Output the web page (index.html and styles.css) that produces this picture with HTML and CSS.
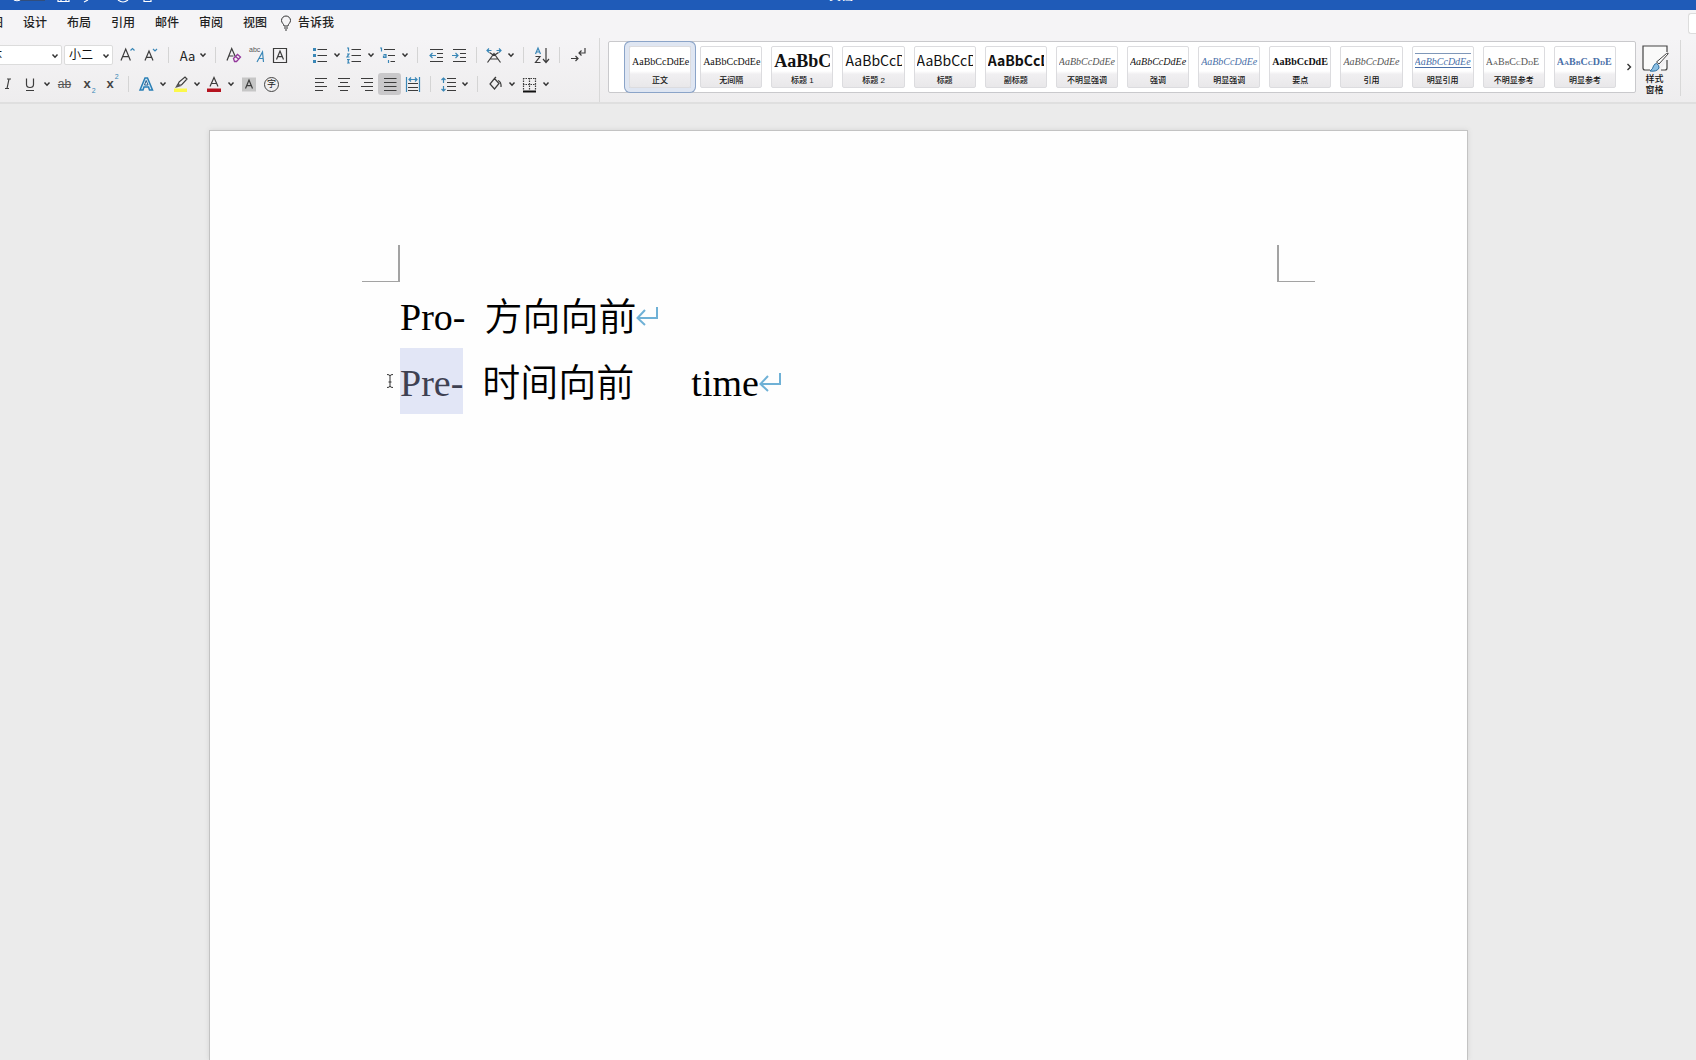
FILE: index.html
```html
<!DOCTYPE html>
<html lang="zh-CN">
<head>
<meta charset="utf-8">
<title>文档</title>
<link rel="stylesheet" href="styles.css">
</head>
<body>
<svg class="defs" aria-hidden="true">
  <symbol id="chev" viewBox="0 0 8 8"><path d="M1.500 2.500 4 5.200 6.500 2.500" fill="none" stroke="#333" stroke-width="1.500"/></symbol>
  <symbol id="ret" viewBox="0 0 24 20"><path d="M21 1V12H2M9 4 1.500 12 9 19" fill="none" stroke="#6fb1d6" stroke-width="2"/></symbol>
</svg>
<header class="titlebar">
  <svg class="quick" viewBox="0 0 160 10" aria-hidden="true">
    <path d="M18 0H45" fill="none" stroke="#3a4a68" stroke-width="1.500"/>
    <g fill="none" stroke="#fff" stroke-width="1.200"><path d="M14 0Q17 1.500 20 0M58 0V1.500H69V0M61 0V1M66 0V1M88 0 84 2M118 0Q123 4 128 0M144 0V1.500H151V0"/></g>
  </svg>
  <h1 class="doc-title">文档</h1>
</header>
<nav class="tabs">
  <a href="#">绘图</a><a href="#">设计</a><a href="#">布局</a><a href="#">引用</a><a href="#">邮件</a><a href="#">审阅</a><a href="#">视图</a>
  <a href="#" class="tell"><svg width="12" height="16" viewBox="0 0 12 16"><path d="M4 11C4 9 1.500 8 1.500 5.500a4.500 4.500 0 0 1 9 0C10.500 8 8 9 8 11ZM4 13H8M5 15H7" fill="none" stroke="#333"/></svg>告诉我</a>
  <button class="share" aria-label="共享"></button>
</nav>
<div class="ribbon">
  <section class="group font-group">
    <div class="row">
      <label class="combo font-name"><select aria-label="字体"><option>宋体</option></select><svg class="chev"><use href="#chev"/></svg></label>
      <label class="combo font-size"><select aria-label="字号"><option>小二</option></select><svg class="chev"><use href="#chev"/></svg></label>
      <button class="tool" aria-label="增大字号"><svg viewBox="0 0 20 20"><path d="M3 15.500 7.700 4 12.400 15.500M4.600 11.700H10.800" class="k"/><path d="M12.500 5.500 14.500 3.500 16.500 5.500" class="b"/></svg></button>
      <button class="tool" aria-label="减小字号"><svg viewBox="0 0 20 20"><path d="M4 15.500 8 6 12 15.500M5.500 12.300H10.500" class="k"/><path d="M12 4 14 6 16 4" class="b"/></svg></button>
      <i class="sep"></i>
      <button class="split" aria-label="更改大小写"><span class="aa">Aa</span><svg class="chev"><use href="#chev"/></svg></button>
      <i class="sep"></i>
      <button class="tool" aria-label="清除格式"><svg viewBox="0 0 20 20"><path d="M3 15.500 7.700 3.500 11.500 12M4.600 11H9.500" class="k"/><path d="m9.500 13.500 4-4 3 2.500-4 4.500H10.500ZM11.500 11.500 14.500 14" fill="none" stroke="#93389b" stroke-width="1.300"/></svg></button>
      <button class="tool" aria-label="拼音指南"><svg viewBox="0 0 20 20"><text x="2" y="7" class="tiny">abc</text><path d="M10 17 15.500 7 16.500 17M12 13.500H16" class="b"/></svg></button>
      <button class="tool" aria-label="字符边框"><svg viewBox="0 0 20 20"><path d="M3.500 3.500H16.500V17.500H3.500ZM6.500 14.500 10 6 13.500 14.500M7.700 11.700H12.300" class="k"/></svg></button>
    </div>
    <div class="row lower">
      <button class="tool" aria-label="倾斜"><svg viewBox="0 0 20 20"><path d="M9 5H13M7 14.500H11M11 5 9 14.500" class="k"/></svg></button>
      <button class="split" aria-label="下划线"><svg viewBox="0 0 20 20"><path d="M6.500 4.500V10.500Q6.500 13.500 10 13.500T13.500 10.500V4.500M6 16.500H14" class="k"/></svg><svg class="chev"><use href="#chev"/></svg></button>
      <button class="tool strike" aria-label="删除线">ab</button>
      <button class="tool script" aria-label="下标"><b>x</b><span class="sub">2</span></button>
      <button class="tool script" aria-label="上标"><b>x</b><span class="sup">2</span></button>
      <i class="sep"></i>
      <button class="split" aria-label="文本效果"><svg viewBox="0 0 20 20"><path d="M4 16 9 4H11.500L16.500 16H13.500L12.500 13H8L7 16Z" fill="#cfe6f5" stroke="#2a7fb5" stroke-width="1.500"/><path d="M8.500 11 10.200 6.500 12 11Z" fill="#fff" stroke="#2b5f8c"/></svg><svg class="chev"><use href="#chev"/></svg></button>
      <button class="split" aria-label="突出显示"><svg viewBox="0 0 20 20"><path d="M4 14.500H17V18H4Z" fill="#fbf84a"/><path d="m8 11 1-3 6-5 2 2-5.500 6Z" class="k"/><path d="m5 14 2.500-4.500 4 2.500Z" fill="#555"/></svg><svg class="chev"><use href="#chev"/></svg></button>
      <button class="split" aria-label="字体颜色"><svg viewBox="0 0 20 20"><path d="M3 14.500H17V18H3Z" fill="#b5131f"/><path d="M6 12.500 10 3.500 14 12.500M7.500 9.500H12.500" class="k"/></svg><svg class="chev"><use href="#chev"/></svg></button>
      <button class="tool" aria-label="字符底纹"><svg viewBox="0 0 20 20"><path d="M3 3.500H17V17.500H3Z" fill="#c6c6c6"/><path d="M6.500 14.500 10 6 13.500 14.500M7.700 11.700H12.300" class="k"/></svg></button>
      <button class="tool" aria-label="带圈字符"><span class="ring">字</span></button>
    </div>
  </section>
  <section class="group">
    <div class="row">
      <button class="split" aria-label="项目符号"><svg viewBox="0 0 20 20"><path d="M7.500 4.500H17M7.500 10.500H17M7.500 16.500H17" class="k"/><path d="M3 3H6V6H3ZM3 9H6V12H3ZM3 15H6V18H3Z" fill="#3a87b7"/></svg><svg class="chev"><use href="#chev"/></svg></button>
      <button class="split" aria-label="编号"><svg viewBox="0 0 20 20"><path d="M7.500 4.500H17M7.500 10.500H17M7.500 16.500H17" class="k"/><path d="M3 3H4.500V6.500M3 9H5L3 12H5.500M3 14.500H5L4 16 5 18H3" class="b"/></svg><svg class="chev"><use href="#chev"/></svg></button>
      <button class="split" aria-label="多级列表"><svg viewBox="0 0 20 20"><path d="M6 4.500H17M10 10.500H17M12.500 16.500H17" class="k"/><path d="M2 3H3.500V6.500M5.500 9.500H8V12.500H5.500V11H8M10.500 15V18" class="b"/></svg><svg class="chev"><use href="#chev"/></svg></button>
      <i class="sep"></i>
      <button class="tool" aria-label="减少缩进"><svg viewBox="0 0 20 20"><path d="M4 4.500H17M11 8.500H17M11 12.500H17M4 16.500H17" class="k"/><path d="M10 10.500H4M6.500 8 4 10.500 6.500 13" class="b"/></svg></button>
      <button class="tool" aria-label="增加缩进"><svg viewBox="0 0 20 20"><path d="M4 4.500H17M11 8.500H17M11 12.500H17M4 16.500H17" class="k"/><path d="M3 10.500H9M6.500 8 9 10.500 6.500 13" class="b"/></svg></button>
      <i class="sep"></i>
      <button class="split" aria-label="中文版式"><svg viewBox="0 0 20 20"><path d="M3.500 17.500 10 8.500 16.500 17.500M6 14H14M5.500 7.500 10 10.500 14.500 7.500" class="k"/><path d="M7.500 5.500H3M5 3.500 3 5.500 5 7.500M12.500 5.500H17M15 3.500 17 5.500 15 7.500" class="b"/></svg><svg class="chev"><use href="#chev"/></svg></button>
      <i class="sep"></i>
      <button class="tool" aria-label="排序"><svg viewBox="0 0 20 20"><path d="M3.500 9 6 3 8.500 9M4.500 7H7.500" class="b"/><path d="M3.500 11.500H8L3.500 17.500H8.500M14 3V17M11 14 14 17.500 17 14" class="k"/></svg></button>
      <i class="sep"></i>
      <button class="tool" aria-label="显示编辑标记"><svg viewBox="0 0 20 20"><path d="M17 3V8H11M13.500 5.500 11 8 13.500 10.500M3 13.500H10M7.500 11 10 13.500 7.500 16" class="k"/></svg></button>
    </div>
    <div class="row">
      <button class="tool" aria-label="左对齐"><svg viewBox="0 0 20 20"><path d="M4 4.500H16M4 8.500H13M4 12.500H16M4 16.500H12" class="k"/></svg></button>
      <button class="tool" aria-label="居中"><svg viewBox="0 0 20 20"><path d="M4 4.500H16M6 8.500H14M4 12.500H16M6 16.500H14" class="k"/></svg></button>
      <button class="tool" aria-label="右对齐"><svg viewBox="0 0 20 20"><path d="M4 4.500H16M7 8.500H16M4 12.500H16M8 16.500H16" class="k"/></svg></button>
      <button class="tool on" aria-label="两端对齐"><svg viewBox="0 0 20 20"><path d="M4 4.500H16.500M4 8.500H16.500M4 12.500H16.500M4 16.500H16.500" class="k"/></svg></button>
      <button class="tool" aria-label="分散对齐"><svg viewBox="0 0 20 20"><path d="M5 9.500H15M5 13.500H15M5 16.500H15" class="k"/><path d="M3.500 3V18M16.500 3V18M6 5.500H14M8 3.500 6 5.500 8 7.500M12 3.500 14 5.500 12 7.500" class="b"/></svg></button>
      <i class="sep"></i>
      <button class="split" aria-label="行距"><svg viewBox="0 0 20 20"><path d="M9 4.500H18M9 8.500H18M9 12.500H18M9 16.500H18" class="k"/><path d="M5.500 4V9M3.500 6 5.500 4 7.500 6M5.500 12V17M3.500 15 5.500 17 7.500 15" class="b"/></svg><svg class="chev"><use href="#chev"/></svg></button>
      <i class="sep"></i>
      <button class="split" aria-label="底纹"><svg viewBox="0 0 20 20"><path d="M9.500 4.500 5 10 9.500 15 14 9.500ZM9.500 4.500 11 3M13 6.500Q16.500 8 16 13" class="k"/></svg><svg class="chev"><use href="#chev"/></svg></button>
      <button class="split" aria-label="边框"><svg viewBox="0 0 20 20"><path d="M4 4.500H17M4.500 4V16M16.500 4V16M10.500 4V16M4 10.500H17" class="k" stroke-dasharray="1.500 1"/><path d="M4 17.500H17" stroke="#111" stroke-width="2"/></svg><svg class="chev"><use href="#chev"/></svg></button>
    </div>
  </section>
  <div class="gallery">
    <div class="styles">
      <button class="style current"><span class="sample">AaBbCcDdEe</span><span class="name">正文</span></button>
      <button class="style"><span class="sample">AaBbCcDdEe</span><span class="name">无间隔</span></button>
      <button class="style"><span class="sample heading">AaBbC</span><span class="name">标题 1</span></button>
      <button class="style"><span class="sample sans">AaBbCcD</span><span class="name">标题 2</span></button>
      <button class="style"><span class="sample sans">AaBbCcD</span><span class="name">标题</span></button>
      <button class="style"><span class="sample sans strong">AaBbCcD</span><span class="name">副标题</span></button>
      <button class="style"><span class="sample italic gray">AaBbCcDdEe</span><span class="name">不明显强调</span></button>
      <button class="style"><span class="sample italic">AaBbCcDdEe</span><span class="name">强调</span></button>
      <button class="style"><span class="sample italic blue">AaBbCcDdEe</span><span class="name">明显强调</span></button>
      <button class="style"><span class="sample strong">AaBbCcDdEe</span><span class="name">要点</span></button>
      <button class="style"><span class="sample italic gray">AaBbCcDdEe</span><span class="name">引用</span></button>
      <button class="style"><span class="sample italic blue ruled">AaBbCcDdEe</span><span class="name">明显引用</span></button>
      <button class="style"><span class="sample caps gray">AaBbCcDdE</span><span class="name">不明显参考</span></button>
      <button class="style"><span class="sample caps blue strong">AaBbCcDdE</span><span class="name">明显参考</span></button>
    </div>
    <button class="more" aria-label="更多样式"><svg width="8" height="10" viewBox="0 0 8 10"><path d="M2.500 2 5.500 5 2.500 8" fill="none" stroke="#333" stroke-width="1.400"/></svg></button>
  </div>
  <button class="pane">
    <svg width="28" height="28" viewBox="0 0 28 28"><path d="M9 26H4Q2 26 2 24V2H26V8M26 16V24Q26 26 24 26H20" fill="#fafafa" stroke="#444" stroke-width="1.200"/><path d="M27 10 18 20 15.500 18 25.500 9.500Q28 8.500 27 10Z" fill="#fff" stroke="#444"/><path d="M9 27Q12 25 12.500 22 13.500 19.500 15.500 19.500 18.500 21 18 24 16 28 9 27Z" fill="#8cc0e4" stroke="#2f6f9f"/></svg>
    <span>样式<br>窗格</span>
  </button>
</div>
<main class="workspace">
  <article class="page">
    <div class="margins"><i class="corner left"></i><i class="corner right"></i></div>
    <p class="line">Pro-&nbsp; <span class="han">方向向前</span><svg class="ret"><use href="#ret"/></svg></p>
    <p class="line"><svg class="ibeam" viewBox="0 0 8 16"><path d="M1 1.500Q4 1.500 4 3V13Q4 14.500 1 14.500M7 1.500Q4 1.500 4 3M7 14.500Q4 14.500 4 13M2.500 9H5.500" fill="none" stroke="#333"/></svg><mark>Pre-</mark>&nbsp; <span class="han">时间向前</span>&nbsp; &nbsp; &nbsp; time<svg class="ret"><use href="#ret"/></svg></p>
  </article>
</main>
</body>
</html>
```
FILE: styles.css
```css
* { box-sizing: border-box; }
body {
  margin: 0;
  min-height: 100vh;
  display: flex;
  flex-direction: column;
  overflow: hidden;
  background: #ebebeb;
  color: #222;
  font-family: "Liberation Sans", "Noto Sans CJK SC", sans-serif;
  font-size: 12px;
}
button, select { font: inherit; color: inherit; border: 0; padding: 0; margin: 0; background: none; }
.defs { position: absolute; width: 0; height: 0; }
.k { fill: none; stroke: #3c3c3c; stroke-width: 1.2; }
.b { fill: none; stroke: #3a87b7; stroke-width: 1.2; }

.titlebar { display: flex; height: 10px; background: #1f5bb8; overflow: hidden; position: relative; }
.quick { width: 160px; height: 10px; flex: none; }
.doc-title { position: absolute; left: 0; right: 14px; bottom: 7px; margin: 0; text-align: center; font-size: 12px; line-height: 14px; color: #fff; }

.tabs { display: flex; align-items: center; gap: 20px; height: 28px; margin-left: -21px; padding-bottom: 2px; background: #f5f4f6; font-weight: 500; line-height: 20px; }
.tabs a { color: inherit; text-decoration: none; white-space: nowrap; }
.tabs a.tell { display: flex; align-items: center; gap: 6px; margin-left: -7px; }
.share { width: 8px; height: 21px; margin-left: auto; background: #fff; border: 1px solid #ddd; border-right: 0; border-radius: 3px 0 0 3px; }

.ribbon { display: flex; height: 66px; background: linear-gradient(#f5f4f6, #eeedee); border-bottom: 2px solid #dfdfdf; overflow: hidden; }
.group { flex: none; display: flex; flex-direction: column; gap: 7px; padding: 6px 0; margin-right: 18px; }
.group + .group { margin-right: 8px; padding-right: 10px; border-right: 1px solid #d8d8d8; }
.font-group { margin-left: -27px; }
.row { display: flex; align-items: center; height: 22px; }
.lower { margin-left: 23px; }
.combo { position: relative; height: 20px; background: #fff; border: 1px solid #dcdcdc; border-radius: 2px; }
.combo select { appearance: none; width: 100%; height: 18px; padding-left: 4px; line-height: 18px; color: #111; }
.combo .chev { position: absolute; right: 2px; top: 6px; margin: 0; }
.font-name { width: 89px; margin-right: 2px; }
.font-size { width: 49px; margin-right: 3px; }
.chev { width: 8px; height: 8px; flex: none; margin: 0 2px; }
.tool { display: flex; align-items: center; justify-content: center; width: 23px; height: 22px; }
.tool svg, .split svg:first-child { width: 20px; height: 20px; flex: none; margin: 0 1px; }
.tool.on { background: #c9c8ca; border-radius: 3px; }
.split { display: flex; align-items: center; width: 34px; height: 22px; }
.aa { width: 22px; padding-left: 3px; text-align: center; font: 13px "Noto Sans CJK SC", sans-serif; }
.sep { width: 1px; height: 16px; margin: 0 6px; background: #d4d4d4; }
.tiny { font-size: 7px; fill: #555; }
.strike { text-decoration: line-through; font-size: 12px; color: #555; }
.script { gap: 1px; padding-left: 4px; font-size: 13px; line-height: 16px; color: #444; }
.sub, .sup { font-size: 7px; line-height: 8px; color: #3a87b7; }
.sub { align-self: flex-end; }
.sup { align-self: flex-start; }
.ring { width: 15px; height: 15px; border: 1px solid #444; border-radius: 50%; font-size: 9px; line-height: 13px; text-align: center; }

.gallery { flex: 1; display: flex; min-width: 0; height: 52px; margin-top: 3px; padding-left: 20px; background: #fff; border: 1px solid #c9c9cc; border-radius: 2px; }
.styles { flex: 1; display: grid; grid-template-columns: repeat(14, minmax(0, 1fr)); gap: 9px; padding: 4px 0; }
.style { display: flex; flex-direction: column; height: 42px; border: 1px solid #dcdcdf; background: linear-gradient(#fff 60%, #f0eff1 68%, #e9e8ea); border-radius: 2px; }
.style.current { box-shadow: 0 0 0 4px #dfe6f2, 0 0 0 5px #8ba4c8; }
.sample { align-self: stretch; height: 28px; margin: 0 0 0 2px; overflow: hidden; color: #111; font: 10px/30px "Liberation Serif", serif; text-align: left; white-space: nowrap; }
.name { align-self: center; color: #111; font-size: 8px; font-weight: 500; line-height: 11px; white-space: nowrap; }
.sample.heading { margin-right: 2px; font-size: 18px; line-height: 28px; font-weight: 700; }
.sample.sans { margin-right: 2px; font-family: "Noto Sans CJK SC", sans-serif; font-size: 14px; line-height: 26px; }
.sample.strong { margin-right: 2px; font-weight: 700; }
.sample.italic { font-style: italic; }
.sample.caps { font-variant: small-caps; }
.sample.gray { color: #555; }
.sample.blue { color: #4a6fa8; }
.sample.ruled { height: 15px; margin: 6px 2px 7px; line-height: 16px; border-top: 1px solid #7f97b8; border-bottom: 1px solid #4a6fa8; }
.more { width: 19px; display: grid; place-items: center; padding-left: 6px; }
.pane { flex: none; display: flex; flex-direction: column; align-items: center; width: 45px; height: 56px; margin: 2px 15px 0 0; padding: 4px 7px 0 0; border-right: 1px solid #d8d8d8; color: #111; font-size: 9px; font-weight: 500; line-height: 11px; }
.pane svg { flex: none; }
.pane span { margin-top: 2px; }

.workspace { flex: 1; display: flex; padding: 26px 228px 0 209px; }
.page { flex: 1; padding-top: 114px; background: #fefefe; border: 1px solid #c3c3c3; border-bottom: 0; box-shadow: 0 0 5px #d4d4d4; }
.margins { display: flex; justify-content: space-between; margin: 0 152px; }
.corner { width: 38px; height: 37px; border: 0 solid #a3a3a3; border-bottom-width: 1px; }
.corner.left { border-right-width: 2px; }
.corner.right { border-left-width: 2px; }
.line { position: relative; height: 66px; margin: 0 190px; color: #000; font: 38px/70px "Liberation Serif", "Noto Sans CJK SC", serif; white-space: nowrap; }
.han { font-weight: 350; line-height: 1; }
.line mark { display: inline-block; height: 66px; line-height: 70px; vertical-align: top; background: #e2e6f6; color: #3e4152; }
.ret { width: 24px; height: 20px; vertical-align: 4px; }
.ibeam { position: absolute; left: -14px; top: 25px; width: 8px; height: 16px; }
```
